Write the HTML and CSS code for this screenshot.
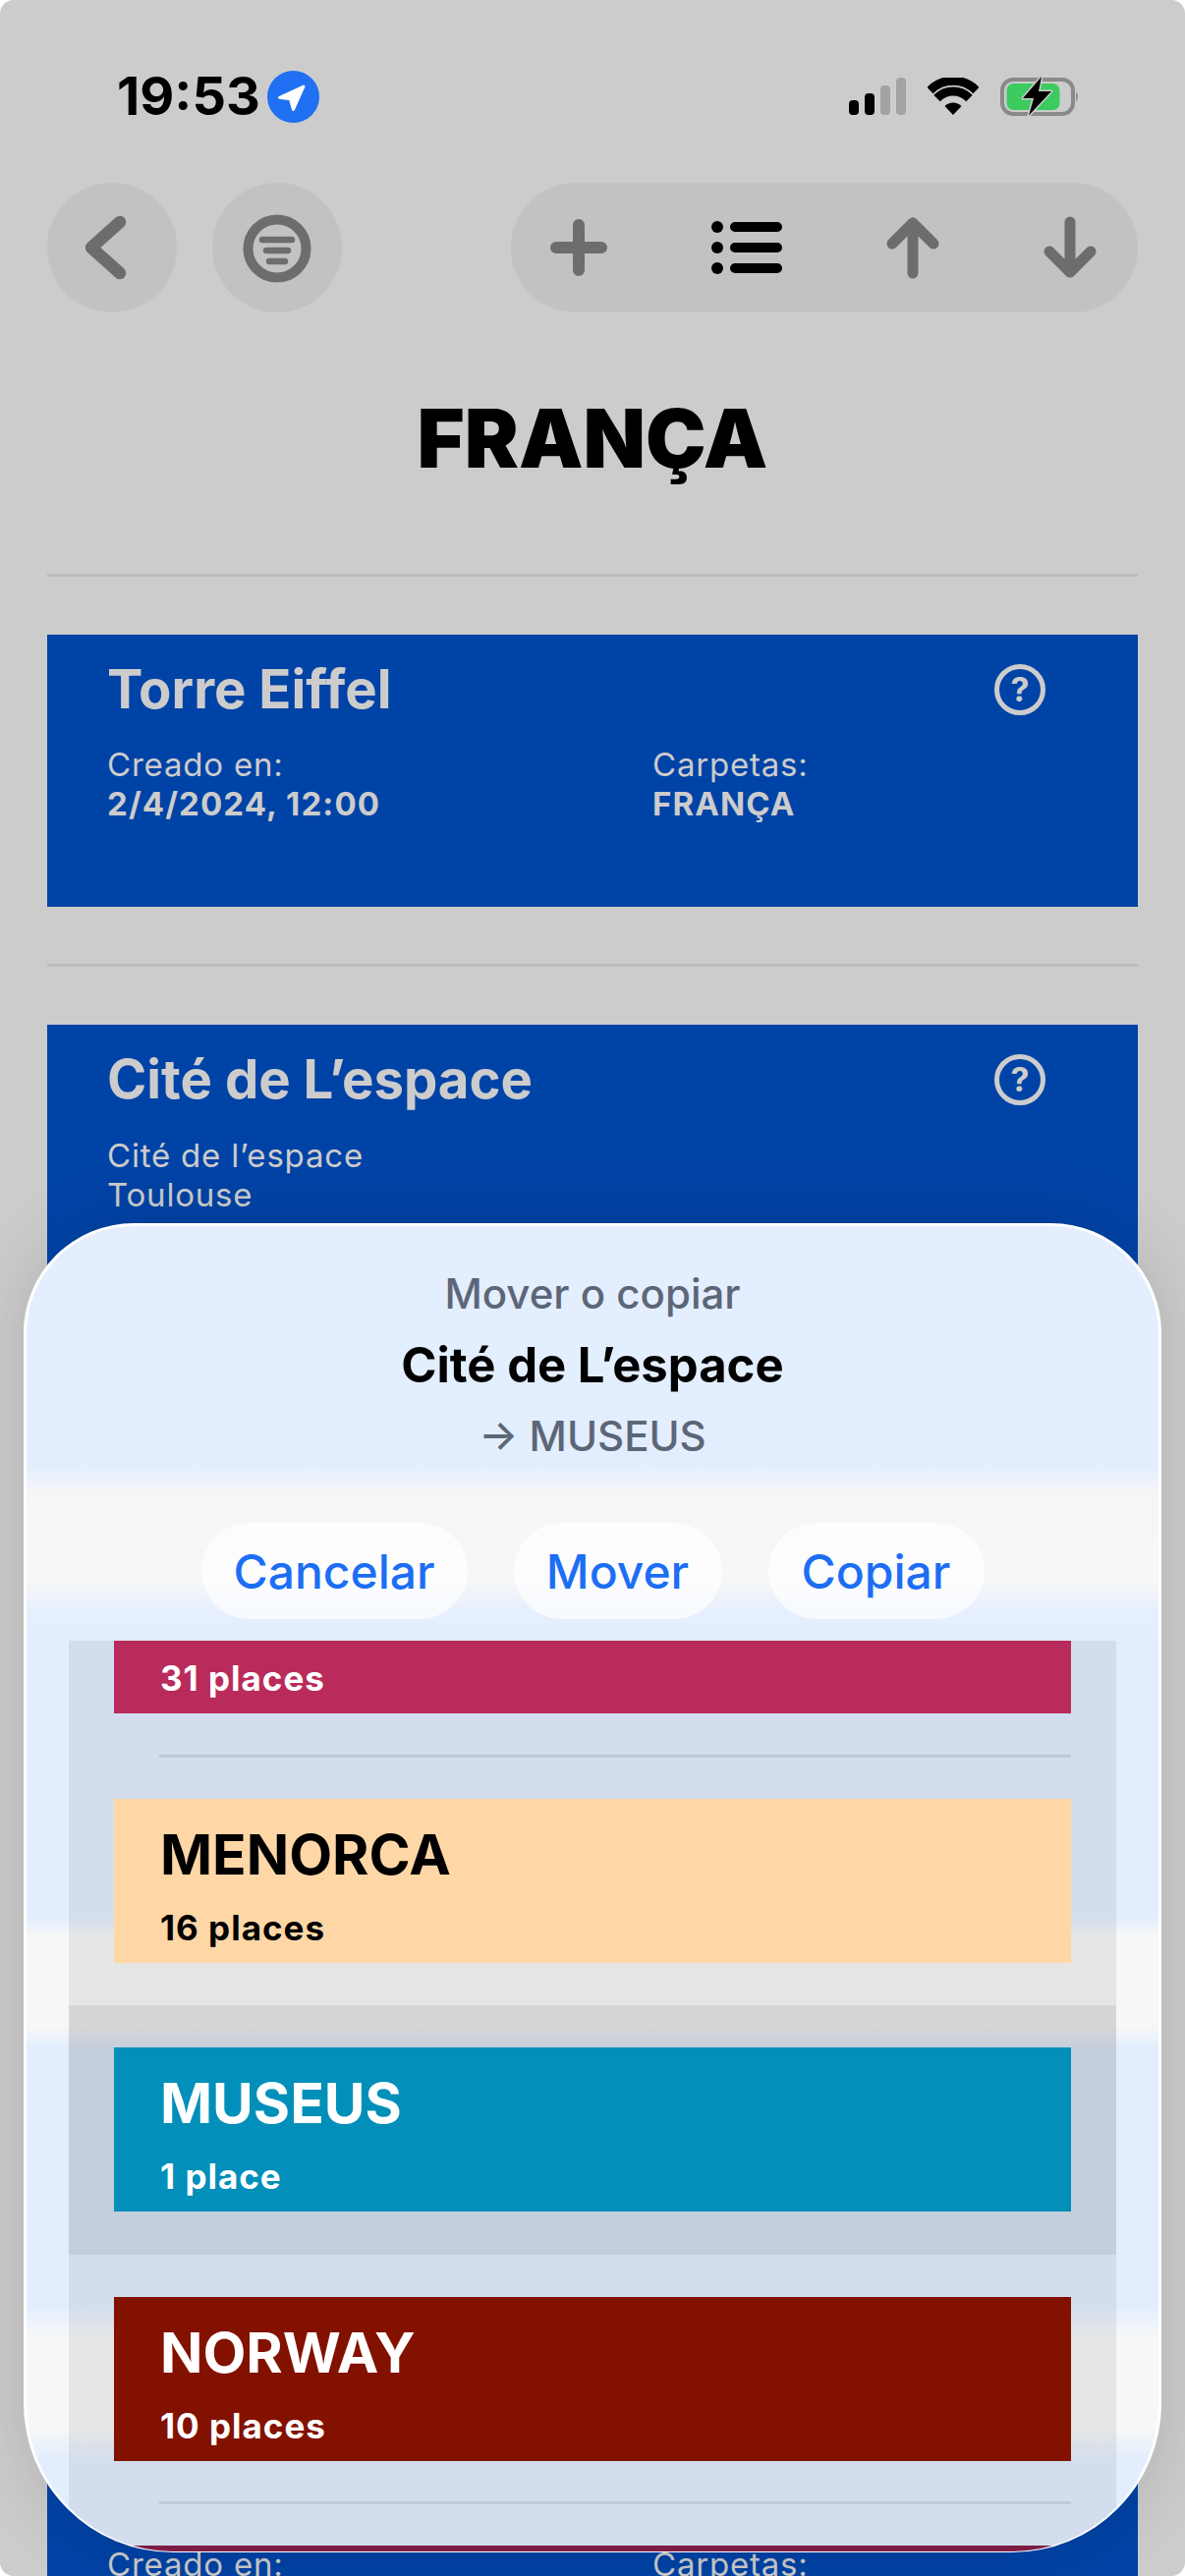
FILE: index.html
```html
<!DOCTYPE html>
<html lang="es">
<head>
    <meta charset="UTF-8">
    <meta name="viewport" content="width=device-width, initial-scale=1.0">
    <title>FRANÇA</title>
    <link rel="stylesheet" href="styles.css">
</head>
<body>
    <div class="screen">
        <div class="status-bar">
            <div class="status-left">
                <span class="status-time">19:53</span>
                <span class="location-badge">
                    <svg width="53" height="53" viewBox="0 0 53 53">
                        <path d="M37 16 L12.5 27.3 L23.5 28.8 L26.5 39.5 Z" fill="#fff" stroke="#fff" stroke-width="3" stroke-linejoin="round"/>
                    </svg>
                </span>
            </div>
            <div class="status-right">
                <svg class="signal-icon" width="58" height="38" viewBox="0 0 58 38">
                    <rect x="0" y="23" width="10" height="15" rx="4" fill="#000"/>
                    <rect x="16" y="16" width="10" height="22" rx="4" fill="#000"/>
                    <rect x="32" y="8" width="10" height="30" rx="4" fill="#a3a3a3"/>
                    <rect x="48" y="0" width="10" height="38" rx="4" fill="#a3a3a3"/>
                </svg>
                <svg class="wifi-icon" width="52" height="38" viewBox="0 0 52 38">
                    <path d="M26 38 L17.5 29 A12 12 0 0 1 34.5 29 Z" fill="#000"/>
                    <path d="M9.5 21 A23 23 0 0 1 42.5 21" fill="none" stroke="#000" stroke-width="9"/>
                    <path d="M2.5 13 A33 33 0 0 1 49.5 13" fill="none" stroke="#000" stroke-width="9"/>
                </svg>
                <svg class="battery-icon" width="82" height="40" viewBox="0 0 82 40">
                    <rect x="2" y="3" width="72" height="35" rx="11" fill="none" stroke="#8a8a8a" stroke-width="4"/>
                    <rect x="6.500" y="7" width="54" height="27" rx="7" fill="#3bcb5f"/>
                    <path d="M77 15 Q81 20 77 26 Z" fill="#8a8a8a"/>
                    <path d="M42 0 L23 22 L34 22 L29 39.500 L52 15 L39 15 Z" fill="#000" stroke="#ccc" stroke-width="3" stroke-linejoin="round" paint-order="stroke"/>
                </svg>
            </div>
        </div>

        <div class="toolbar">
            <div class="round-btn">
                <svg width="132" height="132" viewBox="0 0 132 132">
                    <path d="M74 40 L45 66 L74 92" fill="none" stroke="#6d6d6d" stroke-width="12.500" stroke-linecap="round" stroke-linejoin="round"/>
                </svg>
            </div>
            <div class="round-btn">
                <svg width="132" height="132" viewBox="0 0 132 132">
                    <circle cx="66" cy="67" r="29.500" fill="none" stroke="#6d6d6d" stroke-width="10"/>
                    <path d="M51 58 H81 M55 69 H77 M58 80 H74" fill="none" stroke="#6d6d6d" stroke-width="6.500" stroke-linecap="round"/>
                </svg>
            </div>
            <div class="tool-pill">
                <svg class="tool" width="64" height="64" viewBox="0 0 64 64">
                    <path d="M32 9 V55 M9 32 H55" fill="none" stroke="#6d6d6d" stroke-width="12" stroke-linecap="round"/>
                </svg>
                <svg class="tool tool-list" width="72" height="64" viewBox="0 0 72 64">
                    <circle cx="6" cy="11" r="6" fill="#000"/>
                    <circle cx="6" cy="32" r="6" fill="#000"/>
                    <circle cx="6" cy="53" r="6" fill="#000"/>
                    <path d="M24 11 H67 M24 32 H67 M24 53 H67" fill="none" stroke="#000" stroke-width="10" stroke-linecap="round"/>
                </svg>
                <svg class="tool tool-up" width="64" height="64" viewBox="0 0 64 64">
                    <path d="M32 58 V7 M11 28 L32 7 L53 28" fill="none" stroke="#6d6d6d" stroke-width="11" stroke-linecap="round" stroke-linejoin="round"/>
                </svg>
                <svg class="tool tool-down" width="64" height="64" viewBox="0 0 64 64">
                    <path d="M32 6 V57 M11 36 L32 57 L53 36" fill="none" stroke="#6d6d6d" stroke-width="11" stroke-linecap="round" stroke-linejoin="round"/>
                </svg>
            </div>
        </div>

        <h1 class="page-title">FRANÇA</h1>
        <hr class="rule">

        <div class="place-card">
            <div class="place-head">
                <h2 class="place-name">Torre Eiffel</h2>
                <span class="help-icon">?</span>
            </div>
            <div class="place-meta">
                <div>
                    <div>Creado en:</div>
                    <div class="meta-value">2/4/2024, 12:00</div>
                </div>
                <div>
                    <div>Carpetas:</div>
                    <div class="meta-value">FRANÇA</div>
                </div>
            </div>
        </div>
        <hr class="rule">

        <div class="place-card place-card-open">
            <div class="place-head">
                <h2 class="place-name">Cité de L’espace</h2>
                <span class="help-icon">?</span>
            </div>
            <div class="place-address">
                <div>Cité de l’espace</div>
                <div>Toulouse</div>
            </div>
            <div class="place-meta place-meta-low">
                <div>Creado en:</div>
                <div>Carpetas:</div>
            </div>
        </div>

        <!-- hoja de mover / copiar -->
        <div class="move-sheet">
            <div class="sheet-head">
                <div class="sheet-caption">Mover o copiar</div>
                <div class="sheet-title">Cité de L’espace</div>
                <div class="sheet-target">→ MUSEUS</div>
            </div>
            <div class="sheet-actions">
                <button class="sheet-btn sheet-btn-cancel">Cancelar</button>
                <button class="sheet-btn sheet-btn-move">Mover</button>
                <button class="sheet-btn sheet-btn-copy">Copiar</button>
            </div>
            <div class="folder-list">
                <div class="folder-row folder-row-first">
                    <div class="folder-card folder-card-cut folder-pink">
                        <div class="folder-count">31 places</div>
                    </div>
                </div>
                <div class="row-rule"></div>
                <div class="folder-row">
                    <div class="folder-card folder-peach">
                        <div class="folder-name">MENORCA</div>
                        <div class="folder-count">16 places</div>
                    </div>
                </div>
                <div class="folder-row folder-row-selected">
                    <div class="folder-card folder-teal">
                        <div class="folder-name">MUSEUS</div>
                        <div class="folder-count">1 place</div>
                    </div>
                </div>
                <div class="folder-row folder-row-last">
                    <div class="folder-card folder-red">
                        <div class="folder-name">NORWAY</div>
                        <div class="folder-count">10 places</div>
                    </div>
                </div>
                <div class="row-rule"></div>
                <div class="folder-row">
                    <div class="folder-card folder-plum"></div>
                </div>
            </div>
        </div>
    </div>
</body>
</html>
```

FILE: styles.css
```css
* {
    box-sizing: border-box;
}
body {
    margin: 0;
    background-color: #fff;
    font-family: Inter, "Noto Sans", sans-serif;
}
.screen {
    position: relative;
    width: 1206px;
    height: 2622px;
    padding: 71px 48px 0;
    overflow: hidden;
    background-color: #ccc;
    border-radius: 14px;
}

/* status bar */
.status-bar {
    display: flex;
    justify-content: space-between;
    height: 54px;
}
.status-left {
    display: flex;
    align-items: center;
    gap: 7px;
    padding-left: 71px;
}
.status-time {
    font-size: 54px;
    font-weight: 700;
    line-height: 54px;
    color: #000;
}
.location-badge {
    width: 53px;
    height: 53px;
    background-color: #1f70f2;
    border-radius: 50%;
}
.location-badge svg,
.round-btn svg {
    display: block;
}
.status-right {
    display: flex;
    align-items: flex-start;
    padding: 8px 58px 0 0;
}
.signal-icon {
    margin-right: 22px;
}
.wifi-icon {
    margin-right: 22px;
}
.battery-icon {
    margin-top: -1px;
}

/* toolbar */
.toolbar {
    display: flex;
    gap: 36px;
    margin-top: 61px;
}
.round-btn {
    width: 132px;
    height: 132px;
    background-color: #c2c2c2;
    border-radius: 50%;
}
.tool-pill {
    display: flex;
    align-items: center;
    width: 638px;
    height: 132px;
    margin-left: auto;
    padding: 0 37px;
    background-color: #c2c2c2;
    border-radius: 66px;
}
.tool {
    flex: none;
}
.tool-list {
    margin-left: 103px;
}
.tool-up {
    margin-left: 101px;
}
.tool-down {
    margin-left: 96px;
}

.page-title {
    margin: 80px 0 0;
    padding-bottom: 32px;
    font-size: 82.500px;
    font-weight: 900;
    line-height: 96px;
    text-align: center;
    color: #000;
}
.rule {
    height: 3px;
    margin: 58px 0 59px;
    background-color: #bcbcbc;
    border: none;
}

/* place cards */
.place-card {
    height: 277px;
    padding: 25px 94px 0 61px;
    background-color: #0043a6;
    color: #ccc;
}
.place-card-open {
    height: auto;
}
.place-head {
    display: flex;
    justify-content: space-between;
    align-items: center;
}
.place-name {
    margin: 0;
    font-size: 54.500px;
    font-weight: 700;
    line-height: 60px;
}
.help-icon {
    width: 52px;
    height: 52px;
    margin-top: 2px;
    font-size: 34px;
    font-weight: 700;
    line-height: 42px;
    text-align: center;
    border: 5px solid #ccc;
    border-radius: 50%;
}
.place-meta {
    display: grid;
    grid-template-columns: 555px 1fr;
    margin-top: 27px;
    font-size: 33px;
    line-height: 40px;
    letter-spacing: 0.8px;
}
.meta-value {
    font-weight: 700;
    letter-spacing: 1.100px;
}
.place-address {
    margin-top: 28px;
    font-size: 33px;
    line-height: 40px;
    letter-spacing: 0.8px;
}
.place-meta-low {
    margin-top: 1354px;
}

/* move / copy sheet */
.move-sheet {
    position: absolute;
    top: 1245px;
    left: 24px;
    width: 1158px;
    height: 1353px;
    overflow: hidden;
    background-image: linear-gradient(to bottom,
        #e4eefe 0, #e2eefe 242px, #f6f6f6 274px, #f7f7f7 360px, #e6effd 392px, #e2eefe 417px,
        #e2eefe 702px, #f7f7f7 724px, #f7f7f7 814px, #e2eefe 837px,
        #e2eefe 1097px, #f7f7f7 1132px, #f7f7f7 1222px, #e2eefe 1257px);
    border-style: solid;
    border-color: #fff;
    border-width: 3px 3px 1px;
    border-radius: 112px 112px 152px 152px;
    box-shadow: 0 0 70px rgba(0, 0, 0, 0.14);
}
.sheet-head {
    padding-top: 45px;
    text-align: center;
}
.sheet-caption,
.sheet-target {
    font-size: 42px;
    font-weight: 500;
    line-height: 48px;
    color: #5c6677;
}
.sheet-title {
    margin: 22px 0 21px;
    font-size: 49px;
    font-weight: 700;
    line-height: 54px;
    color: #000;
}
.sheet-actions {
    display: flex;
    justify-content: center;
    gap: 47px;
    margin-top: 64px;
}
.sheet-btn {
    height: 98px;
    padding: 0;
    font-family: inherit;
    font-size: 48px;
    font-weight: 500;
    color: #1c6ef5;
    background-color: rgba(255, 255, 255, 0.68);
    border: none;
    border-radius: 49px;
}
.sheet-btn-cancel {
    width: 271px;
}
.sheet-btn-move {
    width: 212px;
}
.sheet-btn-copy {
    width: 220px;
}

/* folder list inside the sheet */
.folder-list {
    height: 960px;
    margin: 22px 43px 0;
    overflow: hidden;
    background-color: rgba(0, 0, 0, 0.065);
}
.folder-row {
    padding: 42px 46px 43px;
}
.folder-row-first {
    padding: 0 46px 42px;
}
.folder-row-selected {
    padding: 43px 46px 44px;
    background-color: rgba(0, 0, 0, 0.065);
}
.folder-row-last {
    padding: 43px 46px 41px;
}
.row-rule {
    height: 3px;
    margin: 0 46px 0 92px;
    background-color: #bfc9da;
}
.folder-card {
    height: 167px;
    padding: 25px 47px 0;
}
.folder-card-cut {
    height: 74px;
    padding-top: 18px;
}
.folder-name {
    font-size: 57px;
    font-weight: 700;
    line-height: 64px;
}
.folder-name + .folder-count {
    margin-top: 22px;
}
.folder-count {
    font-size: 35px;
    font-weight: 700;
    line-height: 40px;
    letter-spacing: 1px;
}
.folder-pink {
    background-color: #b92b5b;
    color: #fff;
}
.folder-peach {
    background-color: #ffd7a6;
    color: #000;
}
.folder-teal {
    background-color: #028fb9;
    color: #fff;
}
.folder-red {
    background-color: #831100;
    color: #fff;
}
.folder-plum {
    background-color: #7d1c45;
}
```
